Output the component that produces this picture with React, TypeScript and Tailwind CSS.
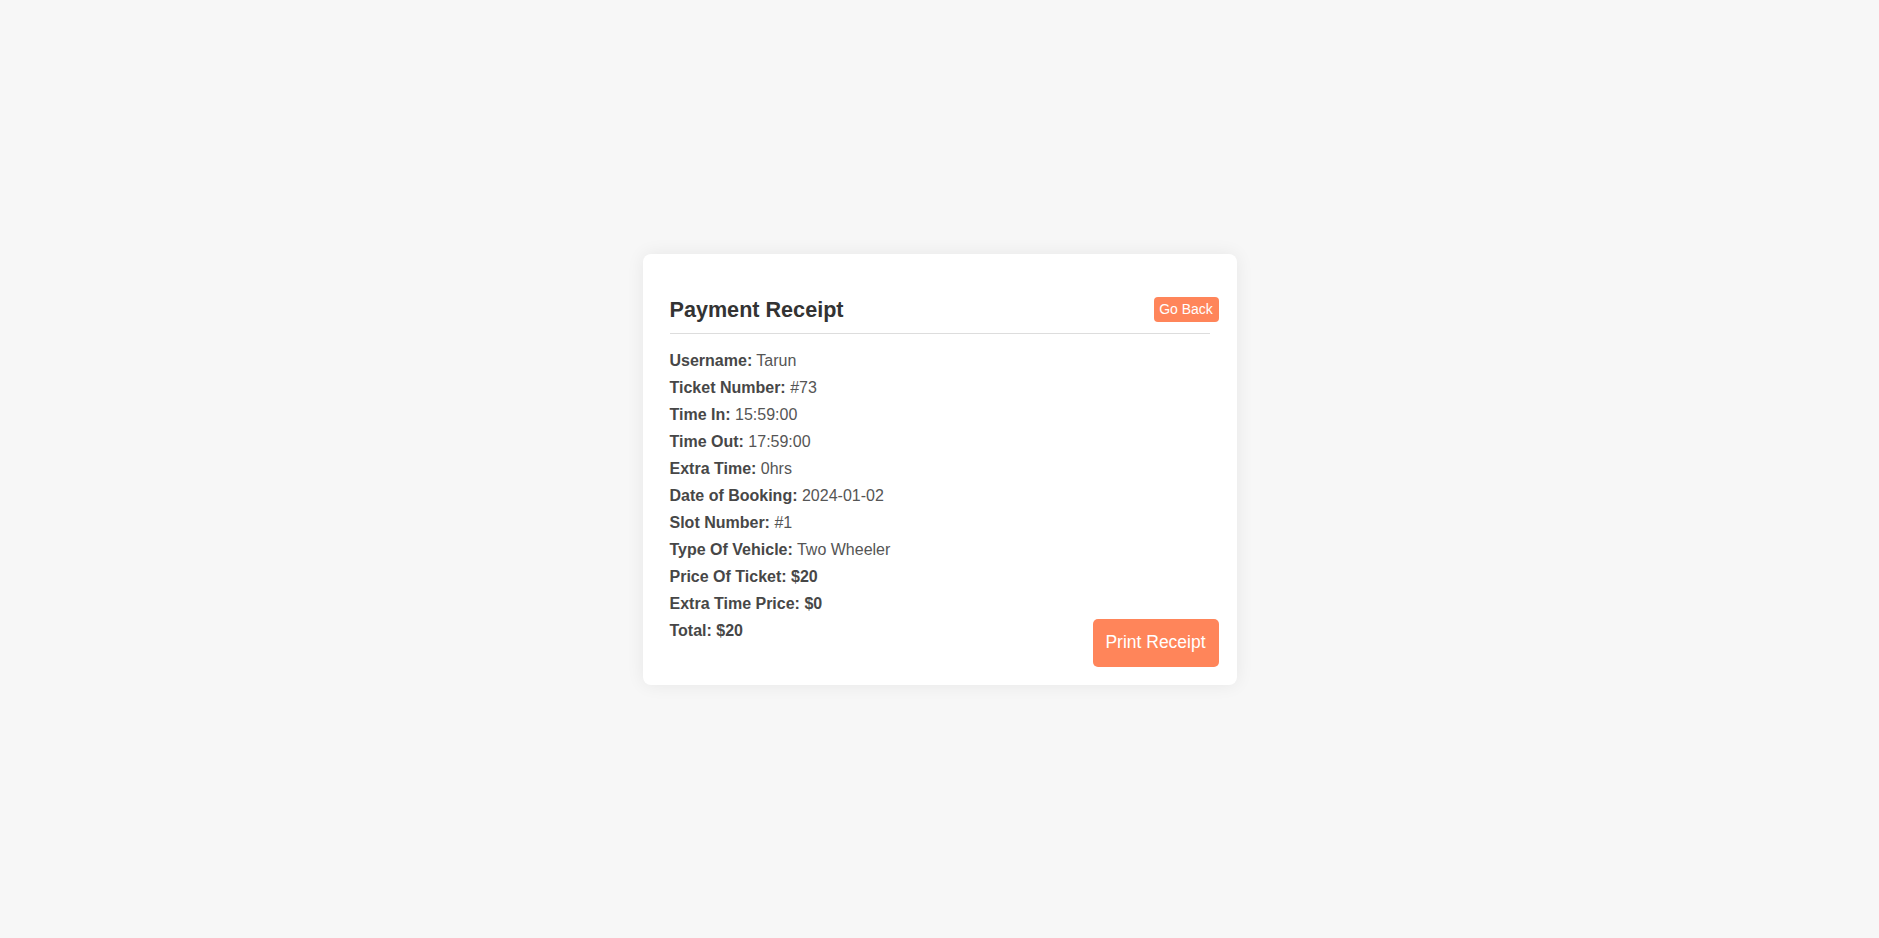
import React from 'react';

const rows: { label: string; value: string; bold?: boolean }[] = [
  { label: 'Username:', value: 'Tarun' },
  { label: 'Ticket Number:', value: '#73' },
  { label: 'Time In:', value: '15:59:00' },
  { label: 'Time Out:', value: '17:59:00' },
  { label: 'Extra Time:', value: '0hrs' },
  { label: 'Date of Booking:', value: '2024-01-02' },
  { label: 'Slot Number:', value: '#1' },
  { label: 'Type Of Vehicle:', value: 'Two Wheeler' },
  { label: 'Price Of Ticket:', value: '$20', bold: true },
  { label: 'Extra Time Price:', value: '$0', bold: true },
  { label: 'Total:', value: '$20', bold: true },
];

const App = () => {
  return (
    <div
      className="min-h-screen bg-[#f7f7f7] flex items-center justify-center"
      style={{ fontFamily: '"Liberation Sans", Arial, sans-serif' }}
    >
      <div className="w-[594px] bg-white rounded-lg shadow-[0_0_18px_rgba(0,0,0,0.07)] px-[18px] pt-[43px] pb-[18px]">
        <div className="flex items-center justify-between">
          <h2 className="pl-[9px] text-[21.6px] leading-[25px] font-bold text-[#333]">Payment Receipt</h2>
          <button className="w-[65px] h-[25px] rounded bg-[#ff855a] text-white text-[14px] leading-[25px]">
            Go Back
          </button>
        </div>
        <div className="mx-[9px] mt-[11px] border-t border-[#dddddd]" />

        <div className="flex justify-between mt-[13px]">
          <div className="pl-[9px] pb-[23px] text-[16px] leading-[27px]">
            {rows.map((row) => (
              <div key={row.label}>
                <span className="font-bold text-[#474747]">{row.label}</span>{' '}
                <span className={row.bold ? 'font-bold text-[#474747]' : 'text-[#555]'}>{row.value}</span>
              </div>
            ))}
          </div>
          <button className="self-end w-[126px] h-[48px] rounded-[5px] bg-[#ff855a] text-white text-[17.5px]">
            Print Receipt
          </button>
        </div>
      </div>
    </div>
  );
};

export default App;
